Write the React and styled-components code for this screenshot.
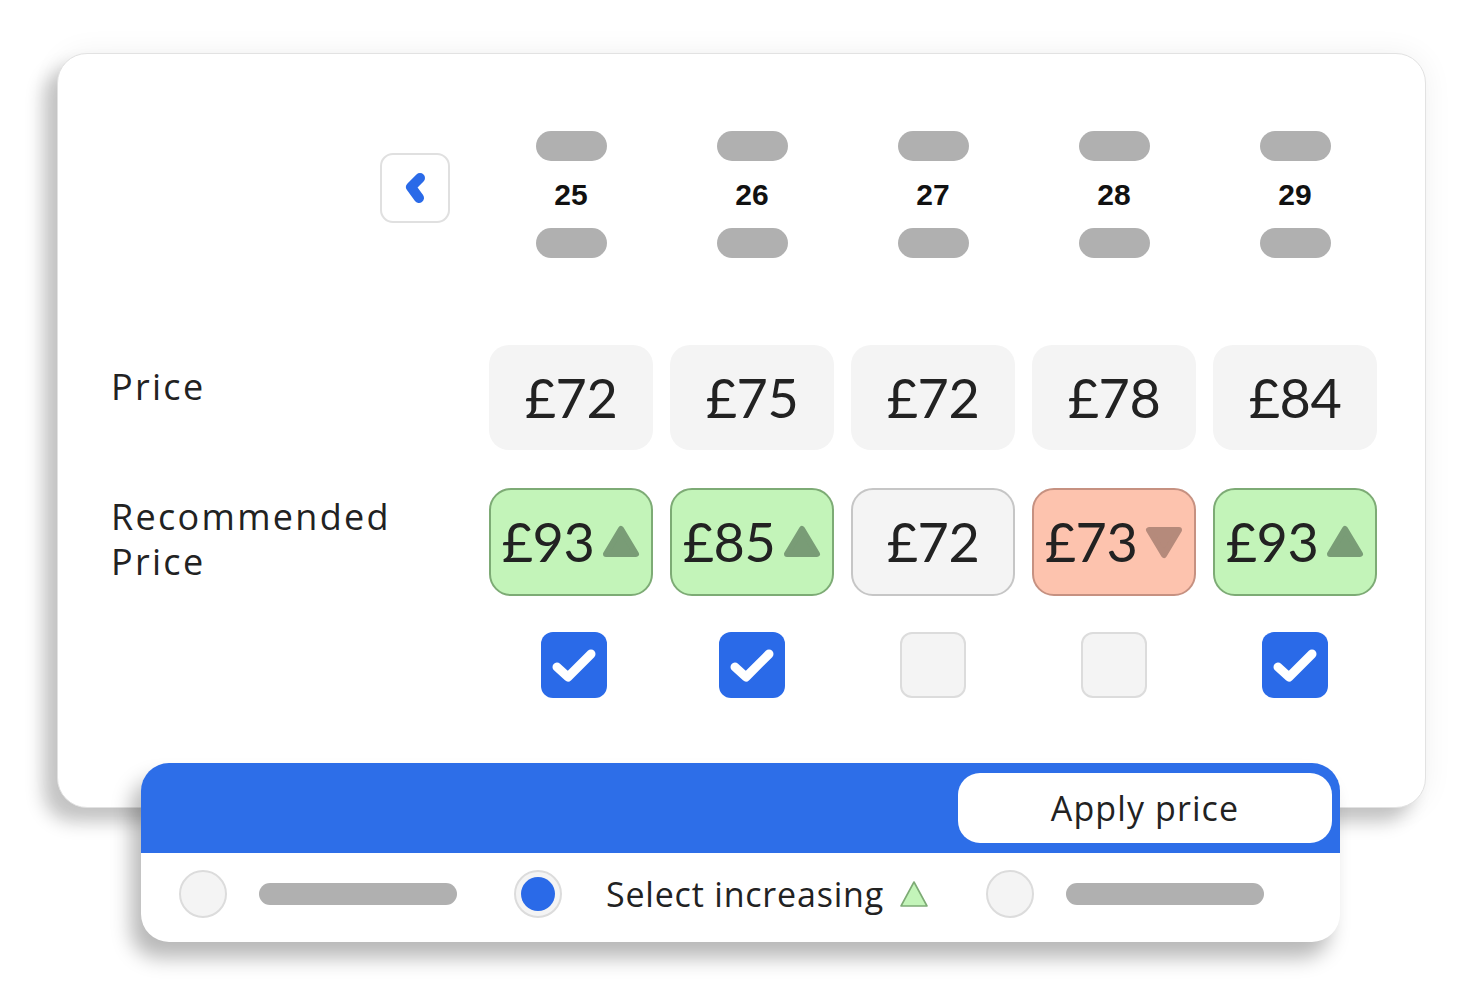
import React from "react";
import styled, { createGlobalStyle } from "styled-components";

const Global = createGlobalStyle`
  html, body { margin: 0; padding: 0; background: #ffffff; }
  body { font-family: "Open Sans", "Liberation Sans", sans-serif; color: #222; }
`;

const Page = styled.div`
  width: 1457px;
  height: 1006px;
  padding: 53px 0 0 57px;
  box-sizing: border-box;
  overflow: hidden;
`;

const Card = styled.div`
  width: 1369px;
  height: 755px;
  box-sizing: border-box;
  background: #fff;
  border-radius: 30px;
  border: 1px solid #e2e2e2;
  box-shadow: -14px 14px 18px rgba(0, 0, 0, 0.22), 0 0 30px rgba(0, 0, 0, 0.06);
  padding: 77px 0 0 53px;
`;

const Row = styled.div`
  display: grid;
  grid-template-columns: 361px repeat(5, 164px);
  column-gap: 17px;
  height: ${(p) => p.$h}px;
  margin-top: ${(p) => p.$mt || 0}px;
`;

const BackButton = styled.div`
  align-self: center;
  justify-self: end;
  margin-right: 22px;
  margin-top: -13px;
  width: 70px;
  height: 70px;
  box-sizing: border-box;
  border: 2px solid #e0e0e0;
  border-radius: 13px;
  display: flex;
  align-items: center;
  justify-content: center;
`;

const DateCol = styled.div`
  display: flex;
  flex-direction: column;
  align-items: center;
  justify-content: space-between;
`;

const Pill = styled.div`
  width: 71px;
  height: 30px;
  border-radius: 15px;
  background: #b0b0b0;
`;

const DayNum = styled.div`
  font-family: "Liberation Sans", Arial, sans-serif;
  font-weight: 700;
  font-size: 30px;
  color: #111;
  line-height: 1;
`;

const Label = styled.div`
  font-size: 36px;
  line-height: 45px;
  letter-spacing: 2.3px;
  color: #222;
  align-self: ${(p) => (p.$top ? "start" : "center")};
  padding-top: ${(p) => p.$top || 0}px;
  margin-top: ${(p) => p.$shift || 0}px;
`;

const Amount = styled.span`
  font-family: Lato, "Liberation Sans", sans-serif;
  font-size: 54px;
  color: #222;
  letter-spacing: -0.5px;
  line-height: 1;
`;

const PriceCell = styled.div`
  background: #f4f4f4;
  border-radius: 20px;
  display: flex;
  align-items: center;
  justify-content: center;
`;

const tones = {
  up: { bg: "#c3f4b9", border: "#7dab75", tri: "#799c76" },
  down: { bg: "#fdc3ae", border: "#c69181", tri: "#b58a7b" },
  flat: { bg: "#f4f4f4", border: "#c6c6c6", tri: "transparent" },
};

const RecCell = styled.div`
  background: ${(p) => tones[p.$tone].bg};
  border: 2px solid ${(p) => tones[p.$tone].border};
  border-radius: 22px;
  box-sizing: border-box;
  display: flex;
  align-items: center;
  justify-content: center;
  gap: 8px;
`;

const CheckBox = styled.div`
  justify-self: center;
  width: 66px;
  height: 66px;
  box-sizing: border-box;
  border-radius: 12px;
  background: ${(p) => (p.$on ? "#2a6ae8" : "#f4f4f4")};
  border: ${(p) => (p.$on ? "none" : "2px solid #dcdcdc")};
  display: flex;
  align-items: center;
  justify-content: center;
  margin-left: ${(p) => p.$nudge || 0}px;
`;

const Panel = styled.div`
  position: relative;
  z-index: 2;
  margin: -45px 0 0 84px;
  width: 1199px;
  height: 179px;
  border-radius: 28px;
  background: #fff;
  overflow: hidden;
  box-shadow: -10px 16px 20px rgba(0, 0, 0, 0.28);
  display: flex;
  flex-direction: column;
`;

const PanelBar = styled.div`
  height: 90px;
  background: #2d6ee8;
  display: flex;
  justify-content: flex-end;
  align-items: center;
  padding-right: 8px;
`;

const ApplyButton = styled.div`
  width: 374px;
  height: 70px;
  background: #fff;
  border-radius: 22px;
  display: flex;
  align-items: center;
  justify-content: center;
  font-size: 34px;
  letter-spacing: 1.1px;
  color: #222;
`;

const OptionsRow = styled.div`
  flex: 1;
  display: flex;
  align-items: center;
  padding: 0 0 8px 38px;
`;

const Option = styled.div`
  display: flex;
  align-items: center;
  gap: ${(p) => p.$gap}px;
  width: ${(p) => p.$w}px;
`;

const Radio = styled.div`
  width: 48px;
  height: 48px;
  box-sizing: border-box;
  border-radius: 50%;
  background: #f4f4f4;
  border: 2px solid #dcdcdc;
  display: flex;
  align-items: center;
  justify-content: center;
  flex-shrink: 0;
`;

const RadioDot = styled.div`
  width: 34px;
  height: 34px;
  border-radius: 50%;
  background: #2a6ae8;
`;

const Bar = styled.div`
  width: 198px;
  height: 22px;
  border-radius: 11px;
  background: #b0b0b0;
`;

const OptionText = styled.div`
  font-size: 34px;
  letter-spacing: 0.8px;
  color: #222;
  display: flex;
  align-items: center;
  gap: 14px;
`;

const Chevron = () => (
  <svg width="28" height="34" viewBox="0 0 28 34">
    <polyline
      points="19,7 10,16 18,27"
      fill="none"
      stroke="#2a6ae8"
      strokeWidth="10"
      strokeLinecap="round"
      strokeLinejoin="round"
    />
  </svg>
);

const Check = () => (
  <svg width="50" height="40" viewBox="0 0 50 40">
    <polyline
      points="8,22 19,32 42,9"
      fill="none"
      stroke="#fff"
      strokeWidth="9"
      strokeLinecap="round"
      strokeLinejoin="round"
    />
  </svg>
);

const Triangle = ({ dir, color }) => (
  <svg width="38" height="34" viewBox="0 0 38 34">
    <polygon
      points={dir === "down" ? "4,5 34,5 19,30" : "19,4 34,29 4,29"}
      fill={color}
      stroke={color}
      strokeWidth="6"
      strokeLinejoin="round"
    />
  </svg>
);

const OutlineTriangle = () => (
  <svg width="32" height="30" viewBox="0 0 32 30">
    <polygon
      points="16,3 29,27 3,27"
      fill="#c3f4b9"
      stroke="#7dab75"
      strokeWidth="1.6"
      strokeLinejoin="round"
    />
  </svg>
);

const days = [25, 26, 27, 28, 29];
const prices = ["£72", "£75", "£72", "£78", "£84"];
const recs = [
  { v: "£93", t: "up" },
  { v: "£85", t: "up" },
  { v: "£72", t: "flat" },
  { v: "£73", t: "down" },
  { v: "£93", t: "up" },
];
const checks = [true, true, false, false, true];

export default function App() {
  return (
    <>
      <Global />
      <Page>
        <Card>
          <Row $h={127}>
            <BackButton>
              <Chevron />
            </BackButton>
            {days.map((d) => (
              <DateCol key={d}>
                <Pill />
                <DayNum>{d}</DayNum>
                <Pill />
              </DateCol>
            ))}
          </Row>
          <Row $h={105} $mt={87}>
            <Label $top={19}>Price</Label>
            {prices.map((p, i) => (
              <PriceCell key={i}>
                <Amount>{p}</Amount>
              </PriceCell>
            ))}
          </Row>
          <Row $h={108} $mt={38}>
            <Label $shift={-6}>
              Recommended
              <br />
              Price
            </Label>
            {recs.map((r, i) => (
              <RecCell key={i} $tone={r.t}>
                <Amount>{r.v}</Amount>
                {r.t !== "flat" && <Triangle dir={r.t} color={tones[r.t].tri} />}
              </RecCell>
            ))}
          </Row>
          <Row $h={66} $mt={36}>
            <div />
            {checks.map((c, i) => (
              <CheckBox key={i} $on={c} $nudge={i === 0 ? 6 : 0}>
                {c && <Check />}
              </CheckBox>
            ))}
          </Row>
        </Card>
        <Panel>
          <PanelBar>
            <ApplyButton>Apply price</ApplyButton>
          </PanelBar>
          <OptionsRow>
            <Option $gap={32} $w={335}>
              <Radio />
              <Bar />
            </Option>
            <Option $gap={44} $w={472}>
              <Radio>
                <RadioDot />
              </Radio>
              <OptionText>
                Select increasing
                <OutlineTriangle />
              </OptionText>
            </Option>
            <Option $gap={32} $w={300}>
              <Radio />
              <Bar />
            </Option>
          </OptionsRow>
        </Panel>
      </Page>
    </>
  );
}
